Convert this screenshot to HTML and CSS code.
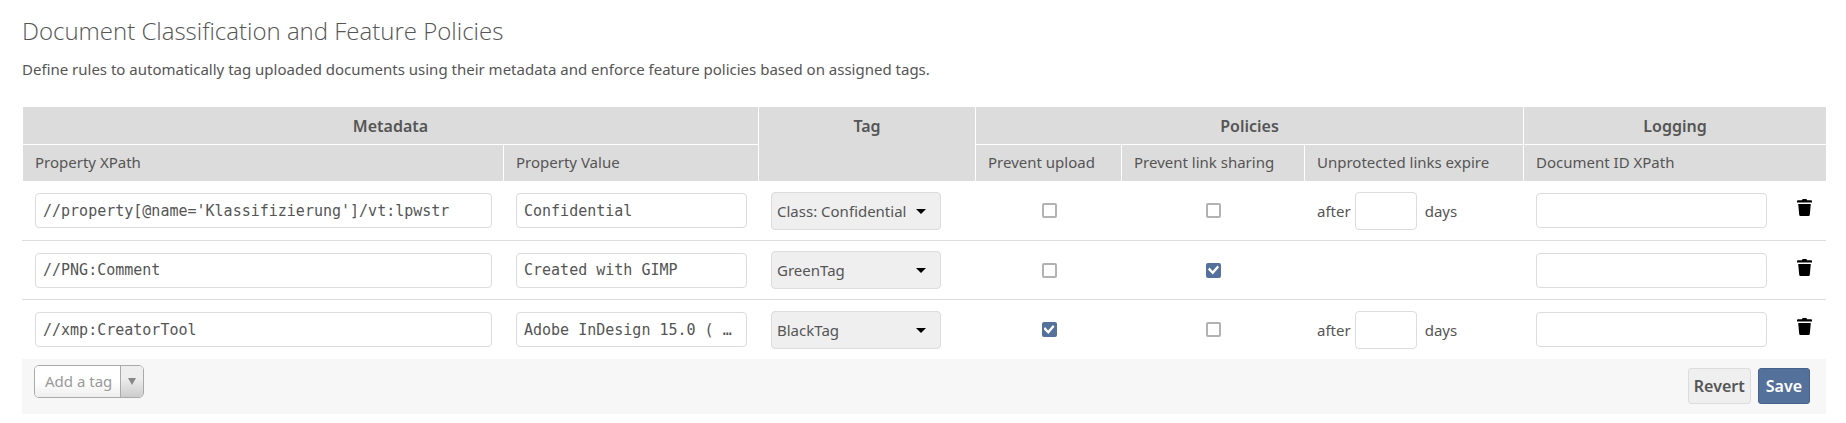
FILE: index.html
```html
<!DOCTYPE html>
<html lang="en">
<head>
<meta charset="utf-8">
<title>Document Classification and Feature Policies</title>
<link rel="stylesheet" href="styles.css">
</head>
<body>
<svg class="sprite" aria-hidden="true">
  <symbol id="trash" viewBox="0 0 15 17">
    <path d="M5 1.2Q5 0 6.2 0H8.8Q10 0 10 1.2H14Q15 1.2 15 2.2V3.6H0V2.2Q0 1.2 1 1.2Z"/>
    <path d="M1.2 5H13.8L12.8 15.8Q12.7 17 11.5 17H3.5Q2.3 17 2.2 15.8Z"/>
  </symbol>
</svg>
<main class="section">
  <h2 class="title">Document Classification and Feature Policies</h2>
  <p class="hint">Define rules to automatically tag uploaded documents using their metadata and enforce feature policies based on assigned tags.</p>
  <form>
    <table class="rules">
      <colgroup>
        <col><col class="col-value"><col class="col-tag"><col class="col-upload"><col class="col-share"><col class="col-expire"><col class="col-docid"><col class="col-delete">
      </colgroup>
      <thead>
        <tr>
          <th colspan="2">Metadata</th>
          <th rowspan="2" class="tag-head">Tag</th>
          <th colspan="3">Policies</th>
          <th colspan="2">Logging</th>
        </tr>
        <tr class="sub">
          <th>Property XPath</th>
          <th>Property Value</th>
          <th>Prevent upload</th>
          <th>Prevent link sharing</th>
          <th>Unprotected links expire</th>
          <th colspan="2">Document ID XPath</th>
        </tr>
      </thead>
      <tbody>
        <tr>
          <td><input class="text" type="text" aria-label="Property XPath" value="//property[@name='Klassifizierung']/vt:lpwstr"></td>
          <td><input class="text" type="text" aria-label="Property Value" value="Confidential"></td>
          <td><div class="picker"><select aria-label="Tag"><option>Class: Confidential</option></select></div></td>
          <td class="center"><input class="check" type="checkbox" aria-label="Prevent upload"></td>
          <td class="center"><input class="check" type="checkbox" aria-label="Prevent link sharing"></td>
          <td><label class="expire">after <input class="text days" type="text"> days</label></td>
          <td><input class="text" type="text" aria-label="Document ID XPath"></td>
          <td><button class="delete" type="button" aria-label="Delete rule"><svg><use href="#trash"/></svg></button></td>
        </tr>
        <tr>
          <td><input class="text" type="text" aria-label="Property XPath" value="//PNG:Comment"></td>
          <td><input class="text" type="text" aria-label="Property Value" value="Created with GIMP"></td>
          <td><div class="picker"><select aria-label="Tag"><option>GreenTag</option></select></div></td>
          <td class="center"><input class="check" type="checkbox" aria-label="Prevent upload"></td>
          <td class="center"><input class="check" type="checkbox" aria-label="Prevent link sharing" checked></td>
          <td></td>
          <td><input class="text" type="text" aria-label="Document ID XPath"></td>
          <td><button class="delete" type="button" aria-label="Delete rule"><svg><use href="#trash"/></svg></button></td>
        </tr>
        <tr>
          <td><input class="text" type="text" aria-label="Property XPath" value="//xmp:CreatorTool"></td>
          <td><input class="text" type="text" aria-label="Property Value" value="Adobe InDesign 15.0 ( …"></td>
          <td><div class="picker"><select aria-label="Tag"><option>BlackTag</option></select></div></td>
          <td class="center"><input class="check" type="checkbox" aria-label="Prevent upload" checked></td>
          <td class="center"><input class="check" type="checkbox" aria-label="Prevent link sharing"></td>
          <td><label class="expire">after <input class="text days" type="text"> days</label></td>
          <td><input class="text" type="text" aria-label="Document ID XPath"></td>
          <td><button class="delete" type="button" aria-label="Delete rule"><svg><use href="#trash"/></svg></button></td>
        </tr>
      </tbody>
    </table>
    <div class="footer">
      <div class="combo">
        <input type="text" placeholder="Add a tag" aria-label="Add a tag">
        <button type="button" aria-label="Show tags"></button>
      </div>
      <div class="actions">
        <button class="btn" type="button">Revert</button>
        <button class="btn primary" type="submit">Save</button>
      </div>
    </div>
  </form>
</main>
</body>
</html>
```
FILE: styles.css
```css
* { box-sizing: border-box; }
body {
  margin: 0;
  background: #fff;
  color: #555;
  font: 15px/24px "Noto Sans", "Open Sans", sans-serif;
}
input, select, button { font: inherit; color: inherit; margin: 0; }
.sprite { display: none; }
.section { padding: 14px 20px 8px 22px; }
.title {
  margin: 0;
  font: 300 24px/34px "Open Sans", sans-serif;
}
.hint { margin: 9px 0 26px; }

.rules {
  width: 100%;
  table-layout: fixed;
  border-collapse: separate;
  border-spacing: 0;
}
.col-value { width: 255px; }
.col-tag { width: 217px; }
.col-upload { width: 146px; }
.col-share { width: 183px; }
.col-expire { width: 219px; }
.col-docid { width: 255px; }
.col-delete { width: 48px; }
.rules th {
  height: 36px;
  padding: 0 12px;
  background: #dcdcdc;
  border-left: 1px solid #fff;
  font-size: 16px;
  font-weight: 600;
  white-space: nowrap;
}
.rules thead tr:first-child th:not(.tag-head) { height: 38px; border-bottom: 1px solid #fff; }
.rules .tag-head { padding-top: 7px; vertical-align: top; }
.rules .sub th { padding-bottom: 2px; font-size: 15px; font-weight: 400; text-align: left; }
.rules td {
  height: 59px;
  padding: 0 11px 0 13px;
  border-bottom: 1px solid #dcdcdc;
}
.rules tbody tr:first-child td { height: 60px; }
.rules tbody tr:last-child td { border-bottom: 0; }
.rules .center { padding: 0 0 0 2px; }

.text {
  display: block;
  width: 100%;
  height: 35px;
  padding: 0 7px;
  border: 1px solid #dcdcdc;
  border-radius: 4px;
  background: #fff;
  font-family: "DejaVu Sans Mono", monospace;
  text-overflow: ellipsis;
}
.expire { display: flex; align-items: center; gap: 4px; }
.days { width: 62px; height: 38px; margin-right: 4px; }

.picker { position: relative; width: 170px; }
.picker select {
  display: block;
  width: 100%;
  height: 38px;
  padding: 0 5px;
  appearance: none;
  border: 1px solid #dcdcdc;
  border-radius: 4px;
  background: #efefef;
}
.picker::after {
  content: "";
  position: absolute;
  top: 17px;
  right: 15px;
  border: solid transparent;
  border-width: 5px 5px 0;
  border-top-color: #000;
  pointer-events: none;
}

.check {
  display: grid;
  width: 15px;
  height: 15px;
  margin: 0 auto;
  appearance: none;
  border: 2px solid #b2b2b2;
  border-radius: 2px;
}
.check:checked { border-color: #54719c; background: #54719c; }
.check:checked::before {
  content: "";
  background: #fff;
  clip-path: polygon(0 45%, 14% 28%, 42% 58%, 86% 10%, 100% 26%, 44% 90%);
}

.delete {
  display: block;
  padding: 0 0 6px;
  margin-left: 6px;
  border: 0;
  background: none;
}
.delete svg { display: block; width: 15px; height: 17px; fill: #000; }

.footer {
  display: flex;
  justify-content: space-between;
  align-items: flex-start;
  min-height: 55px;
  padding: 6px 16px 0 12px;
  background: #f7f7f7;
}
.combo {
  display: flex;
  width: 110px;
  height: 33px;
  border: 1px solid #aaa;
  border-radius: 5px;
  overflow: hidden;
}
.combo input {
  flex: 1;
  min-width: 0;
  padding: 0 0 2px 10px;
  border: 0;
  background: linear-gradient(#fff 50%, #eee);
}
.combo input::placeholder { color: #999; }
.combo button {
  display: grid;
  place-items: center;
  width: 23px;
  padding: 0;
  border: 0;
  border-left: 1px solid #aaa;
  background: linear-gradient(#eee 40%, #ccc);
}
.combo button::before {
  content: "";
  border: solid transparent;
  border-width: 7px 4px 0;
  border-top-color: #888;
}
.actions { display: flex; gap: 7px; padding-top: 3px; }
.btn {
  height: 36px;
  padding: 0 5px;
  border: 1px solid #dcdcdc;
  border-radius: 3px;
  background: #efefef;
  font-size: 16px;
  font-weight: 600;
}
.primary { padding: 0 7px; background: #54719c; border-color: #46618b; color: #fff; }
```
